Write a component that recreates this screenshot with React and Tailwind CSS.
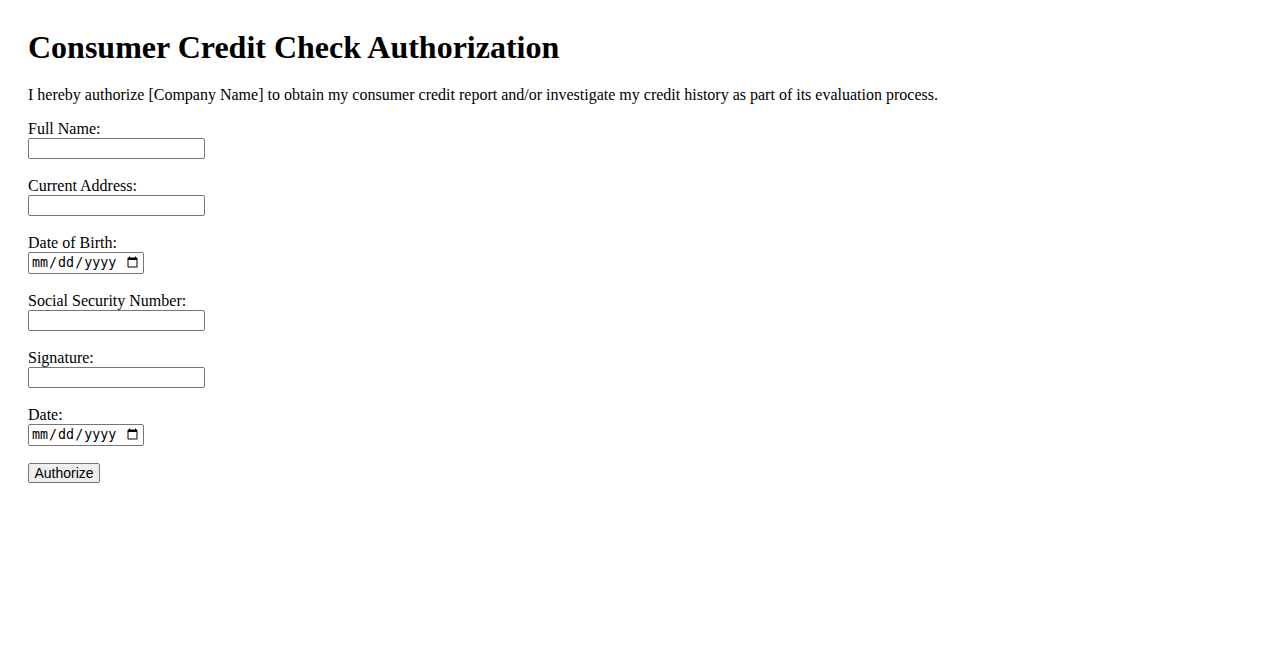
const fields = [
  { label: "Full Name:", type: "text" },
  { label: "Current Address:", type: "text" },
  { label: "Date of Birth:", type: "date" },
  { label: "Social Security Number:", type: "text" },
  { label: "Signature:", type: "text" },
  { label: "Date:", type: "date" },
];

export default function App() {
  return (
    <div className="min-h-screen bg-white text-black px-7 pt-[29px] font-['Liberation_Serif','Times_New_Roman',serif] text-[16px] leading-[1.15]">
      <h1 className="text-[32px] font-bold mb-[20.4px]">Consumer Credit Check Authorization</h1>
      <p className="mb-[15px]">
        I hereby authorize [Company Name] to obtain my consumer credit report and/or investigate my credit history as
        part of its evaluation process.
      </p>
      <form onSubmit={(e) => e.preventDefault()}>
        {fields.map((f) => (
          <div key={f.label} className="mb-[17.6px]">
            <label className="block">{f.label}</label>
            {f.type === "date" ? (
              <input
                type="date"
                className="block w-[116px] h-[22px] border border-[#767676] rounded-[2px] px-[2px] text-[13.33px] font-['DejaVu_Sans_Mono',monospace] bg-white"
              />
            ) : (
              <input
                type="text"
                className="block w-[177px] h-[21px] border border-[#767676] rounded-[2px] px-[2px] py-[1px] text-[13.33px] font-['Liberation_Sans',Arial,sans-serif] bg-white"
              />
            )}
          </div>
        ))}
        <button
          type="submit"
          className="w-[72px] h-[20px] border border-[#767676] rounded-[2px] bg-[#efefef] text-[14px] leading-none font-['Liberation_Sans',Arial,sans-serif]"
        >
          Authorize
        </button>
      </form>
    </div>
  );
}
